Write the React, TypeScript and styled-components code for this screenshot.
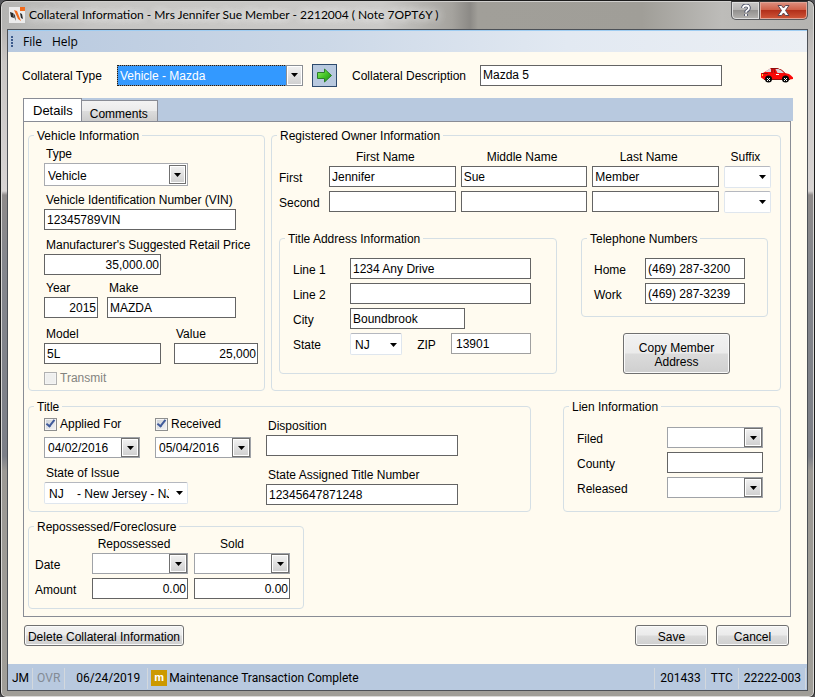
import React, { useId } from "react";
import styled, { createGlobalStyle, css } from "styled-components";

const cream = "#fffbf0";
const steel = "#b8c9df";
const uiFont = '"Liberation Sans", Arial, sans-serif';
const chromeFont = '"Open Sans", "Noto Sans", sans-serif';

const GlobalStyle = createGlobalStyle`
  *, *::before, *::after { box-sizing: border-box; }
  body { margin: 0; background: #55565a; }
  body, input, select, button { font-family: ${uiFont}; font-size: 12px; color: #000; }
`;

/* ---------- window frame ---------- */

const Window = styled.div`
  display: flex;
  flex-direction: column;
  min-height: 100vh;
  padding: 0 6px 6px;
  border: 1px solid #1c1c1c;
  border-radius: 7px 7px 6px 6px;
  box-shadow: inset 0 0 0 1px #d9d8d6;
  background: linear-gradient(180deg, #a9a8a5 0, #c9c6c4 60px, #d8d4d3 190px, #8f8b8a 194px, #85878d 260px, #7c7f87 455px, #9c9994 470px, #a09e98 100%);
`;

const TitleBar = styled.header`
  display: flex;
  align-items: flex-start;
  height: 28px;
  margin: 0 -5px;
  padding: 0 0 0 7px;
  border-radius: 6px 6px 0 0;
  border-top: 1px solid #d0cfcd;
  background: linear-gradient(90deg, #b4b4b2 0, #c6c5c3 90px, #cbcac8 380px, #a5a39e 450px, #8c8a86 468px, #a19f99 476px, #a09e98 640px, #bdbcb9 720px, #b4b3b0 100%);
`;

const Logo = styled.svg`
  flex: none;
  width: 16px;
  height: 16px;
  margin-top: 5px;
`;

const Caption = styled.h1`
  flex: 1;
  margin: 0 0 0 4px;
  font: 400 12px/26px Lato, ${chromeFont};
  white-space: nowrap;
  text-shadow: 0 0 8px #f2f2f2, 0 0 8px #f2f2f2;
`;

const CaptionButton = styled.button<{ $close?: boolean }>`
  display: flex;
  align-items: center;
  justify-content: center;
  height: 19px;
  width: ${(p) => (p.$close ? 48 : 29)}px;
  margin: -1px 0 0;
  padding: 0;
  border: 1px solid #58595c;
  border-top-color: #333;
  border-left-width: ${(p) => (p.$close ? 0 : 1)}px;
  border-radius: ${(p) => (p.$close ? "0 0 5px 0" : "0 0 0 5px")};
  box-shadow: inset 0 0 0 1px ${(p) => (p.$close ? "#e2a596" : "#dedede")};
  background: ${(p) =>
    p.$close
      ? "linear-gradient(#dd9080 0, #cf6149 45%, #b2301a 50%, #d0583a 100%)"
      : "linear-gradient(#c9c8c7 0, #b5b4b3 45%, #93918f 50%, #b5b3b0 100%)"};
`;

const CaptionButtons = styled.div`
  display: flex;
  margin-right: 5px;
`;

const Client = styled.main`
  display: flex;
  flex: 1;
  flex-direction: column;
  border: 1px solid #4d5157;
  background: ${cream};
`;

/* ---------- menu ---------- */

const MenuBar = styled.nav`
  display: flex;
  align-items: center;
  height: 22px;
  padding-left: 3px;
  gap: 10px;
  border-top: 1px solid #9fcdf2;
  background: linear-gradient(90deg, ${steel} 0, #ccd8e7 40%, #e2e9f2 70%, #ebeff4 100%);
`;

const Grip = styled.svg`
  width: 2px;
  height: 11px;
`;

const MenuItem = styled.button`
  padding: 0;
  border: 0;
  background: none;
  font: 12px/20px ${chromeFont};
`;

/* ---------- shared controls ---------- */

const textBoxStyle = css`
  height: 21px;
  min-width: 0;
  padding: 0 2px;
  border: 1px solid #646464;
  border-radius: 0;
  outline: 0;
  background: #fff;
`;

const TextBox = styled.input<{ $width?: number; $right?: boolean; $soft?: boolean }>`
  ${textBoxStyle}
  width: ${(p) => (p.$width ? `${p.$width}px` : "100%")};
  ${(p) => p.$right && "text-align: right; padding-right: 1px;"}
  ${(p) => p.$soft && "border-color: #a0a0a0; padding-left: 4px;"}
`;

const SelectFrame = styled.span<{ $width?: number }>`
  position: relative;
  display: block;
  width: ${(p) => (p.$width ? `${p.$width}px` : "100%")};
`;

type Look = "flat" | "boxed" | "active";

const NativeSelect = styled.select<{ $look: Look }>`
  display: block;
  appearance: none;
  width: 100%;
  height: 22px;
  padding: 2px 18px 0 4px;
  border: 1px solid #dfe6ee;
  border-top-color: #b5b8bf;
  border-radius: 2px;
  outline: 0;
  background: #fff;
  ${(p) => p.$look === "boxed" && "height: 23px; padding-left: 3px; border: 1px solid #a9abb0; border-radius: 0;"}
  ${(p) =>
    p.$look === "active" &&
    `height: 21px; padding-left: 2px; border: 1px solid #8b8f94; border-radius: 0;
     color: #fff; background: #3399ff; outline: 1px dotted #1c1c1c; outline-offset: -1px;`}
`;

const SelectArrow = styled.span<{ $look: Look }>`
  position: absolute;
  top: 0;
  right: 0;
  bottom: 0;
  display: flex;
  align-items: center;
  justify-content: center;
  width: 17px;
  pointer-events: none;
  ${(p) =>
    p.$look === "boxed" &&
    "top: 2px; right: 2px; bottom: 2px; border: 1px solid #707070; box-shadow: inset 0 0 0 1px #fff; background: linear-gradient(#f2f2f2, #cfcfcf);"}
  ${(p) =>
    p.$look === "active" &&
    "border: 1px solid #8b8f94; box-shadow: inset 0 0 0 1px #fff; background: linear-gradient(#f2f2f2, #cfcfcf);"}
`;

const Triangle = () => (
  <svg width="7" height="4" viewBox="0 0 7 4" aria-hidden="true">
    <path d="M0 0h7L3.5 4z" fill="#000" />
  </svg>
);

const Select = ({
  id,
  label,
  options,
  look = "flat",
  width,
}: {
  id?: string;
  label?: string;
  options: string[];
  look?: Look;
  width?: number;
}) => (
  <SelectFrame $width={width}>
    <NativeSelect id={id} aria-label={label} $look={look}>
      {options.map((o) => (
        <option key={o}>{o}</option>
      ))}
    </NativeSelect>
    <SelectArrow $look={look}>
      <Triangle />
    </SelectArrow>
  </SelectFrame>
);

const DateFrame = styled.span`
  display: flex;
  width: 96px;
  height: 21px;
  border: 1px solid #a0a3a8;
  background: #fff;
`;

const DateInput = styled.input`
  flex: 1;
  min-width: 0;
  padding: 1px 0 0 3px;
  border: 0;
  outline: 0;
  background: none;
`;

const DateButton = styled.button`
  display: flex;
  align-items: center;
  justify-content: center;
  width: 18px;
  padding: 0;
  border: 1px solid #707070;
  box-shadow: inset 0 0 0 1px #fff;
  background: linear-gradient(#f2f2f2, #cfcfcf);
`;

const DateBox = ({ id, label, value = "" }: { id?: string; label?: string; value?: string }) => (
  <DateFrame>
    <DateInput id={id} aria-label={label} defaultValue={value} />
    <DateButton type="button" aria-label="Open calendar">
      <Triangle />
    </DateButton>
  </DateFrame>
);

const PushButton = styled.button<{ $width?: number; $height?: number }>`
  width: ${(p) => (p.$width ? `${p.$width}px` : "auto")};
  height: ${(p) => p.$height ?? 21}px;
  padding: 2px 1px 0;
  border: 1px solid #707070;
  border-radius: 3px;
  box-shadow: inset 0 0 0 1px #fafafa;
  background: linear-gradient(#f2f2f2 0, #ebebeb 48%, #dbdbdb 52%, #cfcfcf 100%);
  line-height: 14px;
  white-space: nowrap;
`;

const CheckLabel = styled.label<{ $muted?: boolean }>`
  display: flex;
  align-items: center;
  gap: 3px;
  height: 14px;
  color: ${(p) => (p.$muted ? "#83837f" : "#000")};
`;

const CheckInput = styled.input`
  appearance: none;
  display: grid;
  place-items: center;
  width: 13px;
  height: 13px;
  margin: 0;
  border: 1px solid #8e8f8f;
  box-shadow: inset 0 0 0 1px #f4f4f4;
  background: linear-gradient(135deg, #cbcfd5, #f6f6f6);
  &:disabled { border-color: #b1b1b1; background: #efefee; }
  &:checked::before {
    content: "";
    width: 5px;
    height: 9px;
    margin-top: -3px;
    border: solid #3f5a9b;
    border-width: 0 2px 2px 0;
    transform: rotate(38deg);
  }
`;

/* ---------- header row ---------- */

const HeaderRow = styled.div`
  display: flex;
  align-items: center;
  height: 46px;
  padding: 0 14px;
`;

const HeaderLabel = styled.label<{ $width: number }>`
  flex: none;
  width: ${(p) => p.$width}px;
  padding-top: 2px;
  white-space: nowrap;
`;

const GoButton = styled.button`
  display: flex;
  align-items: center;
  justify-content: center;
  width: 25px;
  height: 23px;
  margin: 0 15px 0 9px;
  padding: 0;
  border: 1px solid #2d4a6d;
  background: ${steel};
`;

const DescriptionBox = styled.input`
  ${textBoxStyle}
  flex: 1;
  margin-right: 39px;
`;

/* ---------- tabs ---------- */

const TabArea = styled.section`
  display: flex;
  flex: 1;
  flex-direction: column;
  margin: 0 14px 0 15px;
`;

const TabStrip = styled.div`
  display: flex;
  align-items: flex-end;
  height: 23px;
  background: ${steel};
`;

const Tab = styled.button<{ $active?: boolean }>`
  height: ${(p) => (p.$active ? 24 : 22)}px;
  padding: ${(p) => (p.$active ? "0 8px 0 9px" : "6px 9px 0 8px")};
  margin-bottom: -1px;
  border: 1px solid #898c95;
  border-left-width: ${(p) => (p.$active ? 1 : 0)}px;
  border-bottom-color: ${(p) => (p.$active ? cream : "#898c95")};
  background: ${(p) => (p.$active ? "#fff" : "linear-gradient(#f3f3f3, #ebebeb 50%, #dcdcdc 52%, #cdcdcd)")};
  font-size: ${(p) => (p.$active ? 13 : 12)}px;
`;

const Panel = styled.div`
  flex: 1;
  margin-right: 2px;
  padding: 5px 9px 7px 4px;
  border: 1px solid #898c95;
`;

const Group = styled.fieldset<{ $pad: string }>`
  min-width: 0;
  margin: 0;
  padding: ${(p) => p.$pad};
  border: 1px solid #d5dfe5;
  border-radius: 4px;
`;

/* The legend is pulled back over the padding of its group. */
const Legend = styled.legend<{ $back: number }>`
  margin-left: -${(p) => p.$back}px;
  padding: 2px 3px 0;
  line-height: 14px;
`;

const TopRow = styled.div`
  display: grid;
  grid-template-columns: 237px minmax(0, 1fr);
  gap: 6px;
`;

const MiddleRow = styled.div`
  display: grid;
  grid-template-columns: minmax(0, 1fr) 218px;
  gap: 32px;
  margin-top: 7px;
`;

const BottomRow = styled.div`
  width: 276px;
  margin-top: 6px;
`;

const FieldRow = styled.div<{ $top?: number; $gap?: number }>`
  display: flex;
  gap: ${(p) => p.$gap ?? 0}px;
  margin-top: ${(p) => p.$top ?? 0}px;
`;

const FieldCell = styled.div<{ $width?: number }>`
  flex: none;
  width: ${(p) => (p.$width ? `${p.$width}px` : "auto")};
`;

const FieldLabel = styled.label`
  display: block;
  padding: 0 0 2px 2px;
  line-height: 14px;
  white-space: nowrap;
`;

const Field = ({
  label,
  width,
  children,
}: {
  label: string;
  width?: number;
  children: (id: string) => React.ReactNode;
}) => {
  const id = useId();
  return (
    <FieldCell $width={width}>
      <FieldLabel htmlFor={id}>{label}</FieldLabel>
      {children(id)}
    </FieldCell>
  );
};

/* Label on the left, control on the right. */
const FormGrid = styled.div<{ $columns: string; $gap?: number }>`
  display: grid;
  grid-template-columns: ${(p) => p.$columns};
  column-gap: ${(p) => p.$gap ?? 0}px;
  row-gap: 4px;
  grid-auto-rows: 21px;
  align-items: start;
`;

const RowLabel = styled.label`
  line-height: 24px;
  white-space: nowrap;
`;

const Headings = styled.div<{ $columns: string; $gap: number }>`
  display: grid;
  grid-template-columns: ${(p) => p.$columns};
  column-gap: ${(p) => p.$gap}px;
  padding-bottom: 2px;
  line-height: 14px;
  text-align: center;
`;

const Heading = styled.span<{ $inset: number }>`
  padding-right: ${(p) => p.$inset}px;
`;

const OwnerRow = styled.div`
  display: grid;
  grid-template-columns: minmax(0, 1fr) 187px;
  gap: 24px;
  margin: 18px 3px 0 0;
  align-items: start;
`;

const ContactColumn = styled.div`
  display: grid;
  gap: 16px;
`;

const CopyAction = styled.div`
  padding-left: 42px;
`;

const InlineFields = styled.div`
  display: flex;
  justify-content: space-between;
`;

const TitleColumns = styled.div`
  display: grid;
  grid-template-columns: 207px 192px;
  gap: 15px;
`;

const Stack = styled.div<{ $top?: number; $gap: number }>`
  display: flex;
  flex-direction: column;
  gap: ${(p) => p.$gap}px;
  padding-top: ${(p) => p.$top ?? 0}px;
`;

/* ---------- footer ---------- */

const Actions = styled.div`
  display: flex;
  gap: 8px;
  padding: 8px 18px 18px 16px;
  > :first-child { margin-right: auto; }
`;

const StatusBar = styled.footer`
  display: flex;
  align-items: center;
  height: 26px;
  padding: 2px 1px 0 0;
  background: ${steel};
  font-family: Roboto, ${uiFont};
`;

const StatusCell = styled.span<{ $pad: string; $muted?: boolean; $grow?: boolean }>`
  display: flex;
  align-items: center;
  flex: ${(p) => (p.$grow ? 1 : "none")};
  gap: 2px;
  height: 21px;
  padding: ${(p) => p.$pad};
  border-right: 1px solid #d3d8dd;
  color: ${(p) => (p.$muted ? "#838b95" : "#000")};
  white-space: nowrap;
`;

const Badge = styled.span`
  width: 16px;
  height: 16px;
  background: #cc9900;
  color: #fff;
  font: 700 11px/14px ${uiFont};
  text-align: center;
`;

/* ---------- drawings ---------- */

const GoArrow = () => (
  <svg width="17" height="15" viewBox="0 0 17 15" aria-hidden="true">
    <defs>
      <linearGradient id="go" x1="0" y1="0" x2="1" y2="1">
        <stop offset="0" stopColor="#9bf06a" />
        <stop offset="0.5" stopColor="#44c527" />
        <stop offset="1" stopColor="#168a12" />
      </linearGradient>
    </defs>
    <path d="M1.500 4.500h7v-3.500l7 6.500-7 6.500v-3.500h-7z" fill="url(#go)" stroke="#2a7d2a" />
  </svg>
);

const Car = () => (
  <svg width="32" height="15" viewBox="0 0 32 15" role="img" aria-label="Vehicle">
    <path d="M0 5h2l5-3 3-2h6l5 2 3 3 4 1 2 1.500 2 2V11l-3 .5H3L0 9.500z" fill="#fb0808" />
    <path d="M10 .5h6l5 2 3 3" fill="none" stroke="#8c1010" />
    <path d="M4 4l4-3h2v3zM14.500 1h3l3 1.500 2.500 2.500h-6.500z" fill="#d8d4dc" />
    <path d="M11 1v4M13 1l1 4" stroke="#8c1010" />
    <path d="M1 5.500h6M3 11.500h26" stroke="#8c1010" />
    <path d="M1 6h1v2H1z" fill="#ffd23c" />
    <path d="M15 6.500h3" stroke="#fff" />
    <circle cx="7.500" cy="11" r="3.500" fill="#080808" />
    <circle cx="24.500" cy="11" r="3.500" fill="#080808" />
    <path
      shapeRendering="crispEdges"
      d="M6 10h1v1H6zM8 10h1v1H8zM7 11h1v1H7zM6 12h1v1H6zM8 12h1v1H8zM23 10h1v1h-1zM25 10h1v1h-1zM24 11h1v1h-1zM23 12h1v1h-1zM25 12h1v1h-1z"
      fill="#fff"
    />
  </svg>
);

const AppMark = () => (
  <Logo viewBox="0 0 16 16" aria-hidden="true">
    <rect width="16" height="16" fill="#ececec" />
    <path d="M1 5l3 1 1 5-3-1zM11 6l2 1 1 5-2-1z" fill="#2a2a2a" />
    <path d="M4 6l2 2 1 6-2-4z" fill="#454545" />
    <path d="M5 3l3 1 4 10-3-2z" fill="#f26a1b" />
    <rect x="11" y="0" width="5" height="4" fill="#f26a1b" />
  </Logo>
);

const nameColumns = "45px repeat(3, minmax(0, 1fr)) 47px";
const repoColumns = "51px 96px 96px";

const TextField = ({ label, value, width, right }: { label: string; value?: string; width: number; right?: boolean }) => (
  <Field label={label} width={width}>
    {(id) => <TextBox id={id} defaultValue={value} $right={right} />}
  </Field>
);

const VehicleInformation = () => (
  <Group $pad="4px 0 5px 15px">
    <Legend $back={10}>Vehicle Information</Legend>
    <Field label="Type" width={144}>
      {(id) => <Select id={id} look="boxed" options={["Vehicle"]} />}
    </Field>
    <FieldRow $top={7}>
      <TextField label="Vehicle Identification Number (VIN)" value="12345789VIN" width={192} />
    </FieldRow>
    <FieldRow $top={8}>
      <TextField label="Manufacturer's Suggested Retail Price" value="35,000.00" width={117} right />
    </FieldRow>
    <FieldRow $top={6} $gap={9}>
      <TextField label="Year" value="2015" width={54} right />
      <TextField label="Make" value="MAZDA" width={129} />
    </FieldRow>
    <FieldRow $top={9} $gap={13}>
      <TextField label="Model" value="5L" width={117} />
      <TextField label="Value" value="25,000" width={84} right />
    </FieldRow>
    <FieldRow $top={7}>
      <CheckLabel $muted>
        <CheckInput type="checkbox" disabled />
        Transmit
      </CheckLabel>
    </FieldRow>
  </Group>
);

const OwnerInformation = () => (
  <Group $pad="7px 9px 15px 7px">
    <Legend $back={2}>Registered Owner Information</Legend>
    <Headings $columns={nameColumns} $gap={5}>
      <span />
      <Heading $inset={14}>First Name</Heading>
      <Heading $inset={4}>Middle Name</Heading>
      <Heading $inset={14}>Last Name</Heading>
      <Heading $inset={4}>Suffix</Heading>
    </Headings>
    <FormGrid $columns={nameColumns} $gap={5}>
      {[
        { row: "First", names: ["Jennifer", "Sue", "Member"] },
        { row: "Second", names: ["", "", ""] },
      ].map(({ row, names }) => (
        <React.Fragment key={row}>
          <RowLabel htmlFor={`owner-${row}`}>{row}</RowLabel>
          {names.map((n, i) => (
            <TextBox
              key={i}
              id={i === 0 ? `owner-${row}` : undefined}
              aria-label={`${row} owner ${["first", "middle", "last"][i]} name`}
              defaultValue={n}
            />
          ))}
          <Select label={`${row} owner suffix`} options={[""]} />
        </React.Fragment>
      ))}
    </FormGrid>
    <OwnerRow>
      <Group $pad="12px 25px 19px 13px">
        <Legend $back={8}>Title Address Information</Legend>
        <FormGrid $columns="57px minmax(0, 1fr)">
          <RowLabel htmlFor="line1">Line 1</RowLabel>
          <TextBox id="line1" defaultValue="1234 Any Drive" />
          <RowLabel htmlFor="line2">Line 2</RowLabel>
          <TextBox id="line2" />
          <RowLabel htmlFor="city">City</RowLabel>
          <TextBox id="city" defaultValue="Boundbrook" $width={115} />
          <RowLabel htmlFor="state">State</RowLabel>
          <InlineFields>
            <Select id="state" options={["NJ"]} width={52} />
            <RowLabel htmlFor="zip">ZIP</RowLabel>
            <TextBox id="zip" defaultValue="13901" $width={80} $soft />
          </InlineFields>
        </FormGrid>
      </Group>
      <ContactColumn>
        <Group $pad="12px 22px 12px 12px">
          <Legend $back={7}>Telephone Numbers</Legend>
          <FormGrid $columns="51px minmax(0, 1fr)">
            <RowLabel htmlFor="home">Home</RowLabel>
            <TextBox id="home" defaultValue="(469) 287-3200" />
            <RowLabel htmlFor="work">Work</RowLabel>
            <TextBox id="work" defaultValue="(469) 287-3239" />
          </FormGrid>
        </Group>
        <CopyAction>
          <PushButton type="button" $width={107} $height={41}>
            Copy Member
            <br />
            Address
          </PushButton>
        </CopyAction>
      </ContactColumn>
    </OwnerRow>
  </Group>
);

const TitleInformation = () => (
  <Group $pad="3px 15px 6px 15px">
    <Legend $back={10}>Title</Legend>
    <TitleColumns>
      <Stack $gap={8}>
        <FieldRow $gap={15}>
          <Stack $gap={6}>
            <CheckLabel>
              <CheckInput type="checkbox" defaultChecked />
              Applied For
            </CheckLabel>
            <DateBox label="Applied for date" value="04/02/2016" />
          </Stack>
          <Stack $gap={6}>
            <CheckLabel>
              <CheckInput type="checkbox" defaultChecked />
              Received
            </CheckLabel>
            <DateBox label="Received date" value="05/04/2016" />
          </Stack>
        </FieldRow>
        <Field label="State of Issue" width={144}>
          {(id) => <Select id={id} options={["NJ\u00a0\u00a0\u00a0\u00a0- New Jersey - NJ"]} />}
        </Field>
      </Stack>
      <Stack $top={2} $gap={12}>
        <TextField label="Disposition" width={192} />
        <TextField label="State Assigned Title Number" value="12345647871248" width={192} />
      </Stack>
    </TitleColumns>
  </Group>
);

const LienInformation = () => (
  <Group $pad="13px 17px 13px 13px">
    <Legend $back={8}>Lien Information</Legend>
    <FormGrid $columns="minmax(0, 1fr) 96px">
      <RowLabel htmlFor="filed">Filed</RowLabel>
      <DateBox id="filed" />
      <RowLabel htmlFor="county">County</RowLabel>
      <TextBox id="county" />
      <RowLabel htmlFor="released">Released</RowLabel>
      <DateBox id="released" />
    </FormGrid>
  </Group>
);

const Repossession = () => (
  <BottomRow>
    <Group $pad="3px 12px 9px 6px">
      <Legend $back={1}>Repossessed/Foreclosure</Legend>
      <Headings $columns={repoColumns} $gap={6}>
        <span />
        <Heading $inset={12}>Repossessed</Heading>
        <Heading $inset={20}>Sold</Heading>
      </Headings>
      <FormGrid $columns={repoColumns} $gap={6}>
        <RowLabel htmlFor="repo-date">Date</RowLabel>
        <DateBox id="repo-date" />
        <DateBox label="Sold date" />
        <RowLabel htmlFor="repo-amount">Amount</RowLabel>
        <TextBox id="repo-amount" defaultValue="0.00" $right />
        <TextBox aria-label="Sold amount" defaultValue="0.00" $right />
      </FormGrid>
    </Group>
  </BottomRow>
);

export default function App() {
  return (
    <>
      <GlobalStyle />
      <Window>
        <TitleBar>
          <AppMark />
          <Caption>Collateral Information - Mrs Jennifer Sue Member - 2212004 ( Note 7OPT6Y )</Caption>
          <CaptionButtons>
            <CaptionButton type="button" aria-label="Help">
              <svg width="10" height="13" viewBox="0 0 10 13" aria-hidden="true">
                <path d="M2 4q0-2.500 3-2.500t3 2.500q0 1.500-1.500 2.300T5 8.500M5 10v2" fill="none" stroke="#4b5068" strokeWidth="3.600" />
                <path d="M2 4q0-2.500 3-2.500t3 2.500q0 1.500-1.500 2.300T5 8.500M5 10v2" fill="none" stroke="#fff" strokeWidth="1.800" />
              </svg>
            </CaptionButton>
            <CaptionButton type="button" aria-label="Close" $close>
              <svg width="13" height="11" viewBox="0 0 13 11" aria-hidden="true">
                <path d="M1 .5h3.500l2 2.500 2-2.500H12L8.500 5.500l3.500 5H8.500l-2-2.500-2 2.500H1l3.500-5z" fill="#fff" stroke="#5b4550" />
              </svg>
            </CaptionButton>
          </CaptionButtons>
        </TitleBar>
        <Client>
          <MenuBar>
            <Grip viewBox="0 0 2 11" aria-hidden="true">
              <path d="M0 0h2v2H0zM0 3h2v2H0zM0 6h2v2H0zM0 9h2v2H0z" fill="#3c5a8c" />
            </Grip>
            <MenuItem type="button">File</MenuItem>
            <MenuItem type="button">Help</MenuItem>
          </MenuBar>
          <HeaderRow>
            <HeaderLabel htmlFor="ctype" $width={95}>Collateral Type</HeaderLabel>
            <Select id="ctype" look="active" options={["Vehicle - Mazda"]} width={186} />
            <GoButton type="button" aria-label="Go">
              <GoArrow />
            </GoButton>
            <HeaderLabel htmlFor="cdesc" $width={128}>Collateral Description</HeaderLabel>
            <DescriptionBox id="cdesc" defaultValue="Mazda 5" />
            <Car />
          </HeaderRow>
          <TabArea>
            <TabStrip role="tablist">
              <Tab type="button" role="tab" aria-selected="true" $active>Details</Tab>
              <Tab type="button" role="tab" aria-selected="false">Comments</Tab>
            </TabStrip>
            <Panel role="tabpanel">
              <TopRow>
                <VehicleInformation />
                <OwnerInformation />
              </TopRow>
              <MiddleRow>
                <TitleInformation />
                <LienInformation />
              </MiddleRow>
              <Repossession />
            </Panel>
          </TabArea>
          <Actions>
            <PushButton type="button" $width={160}>Delete Collateral Information</PushButton>
            <PushButton type="button" $width={73}>Save</PushButton>
            <PushButton type="button" $width={73}>Cancel</PushButton>
          </Actions>
          <StatusBar>
            <StatusCell $pad="0 3px 0 4px">JM</StatusCell>
            <StatusCell $pad="0 4px">
              <StatusMuted>OVR</StatusMuted>
            </StatusCell>
            <StatusCell $pad="0 7px 0 11px">06/24/2019</StatusCell>
            <StatusCell $pad="0 3px" $grow>
              <Badge>m</Badge>
              Maintenance Transaction Complete
            </StatusCell>
            <StatusCell $pad="0 4px 0 5px">201433</StatusCell>
            <StatusCell $pad="0 5px">TTC</StatusCell>
            <StatusCell $pad="0 4px 0 5px">22222-003</StatusCell>
          </StatusBar>
        </Client>
      </Window>
    </>
  );
}

const StatusMuted = styled.span`
  color: #838b95;
`;
